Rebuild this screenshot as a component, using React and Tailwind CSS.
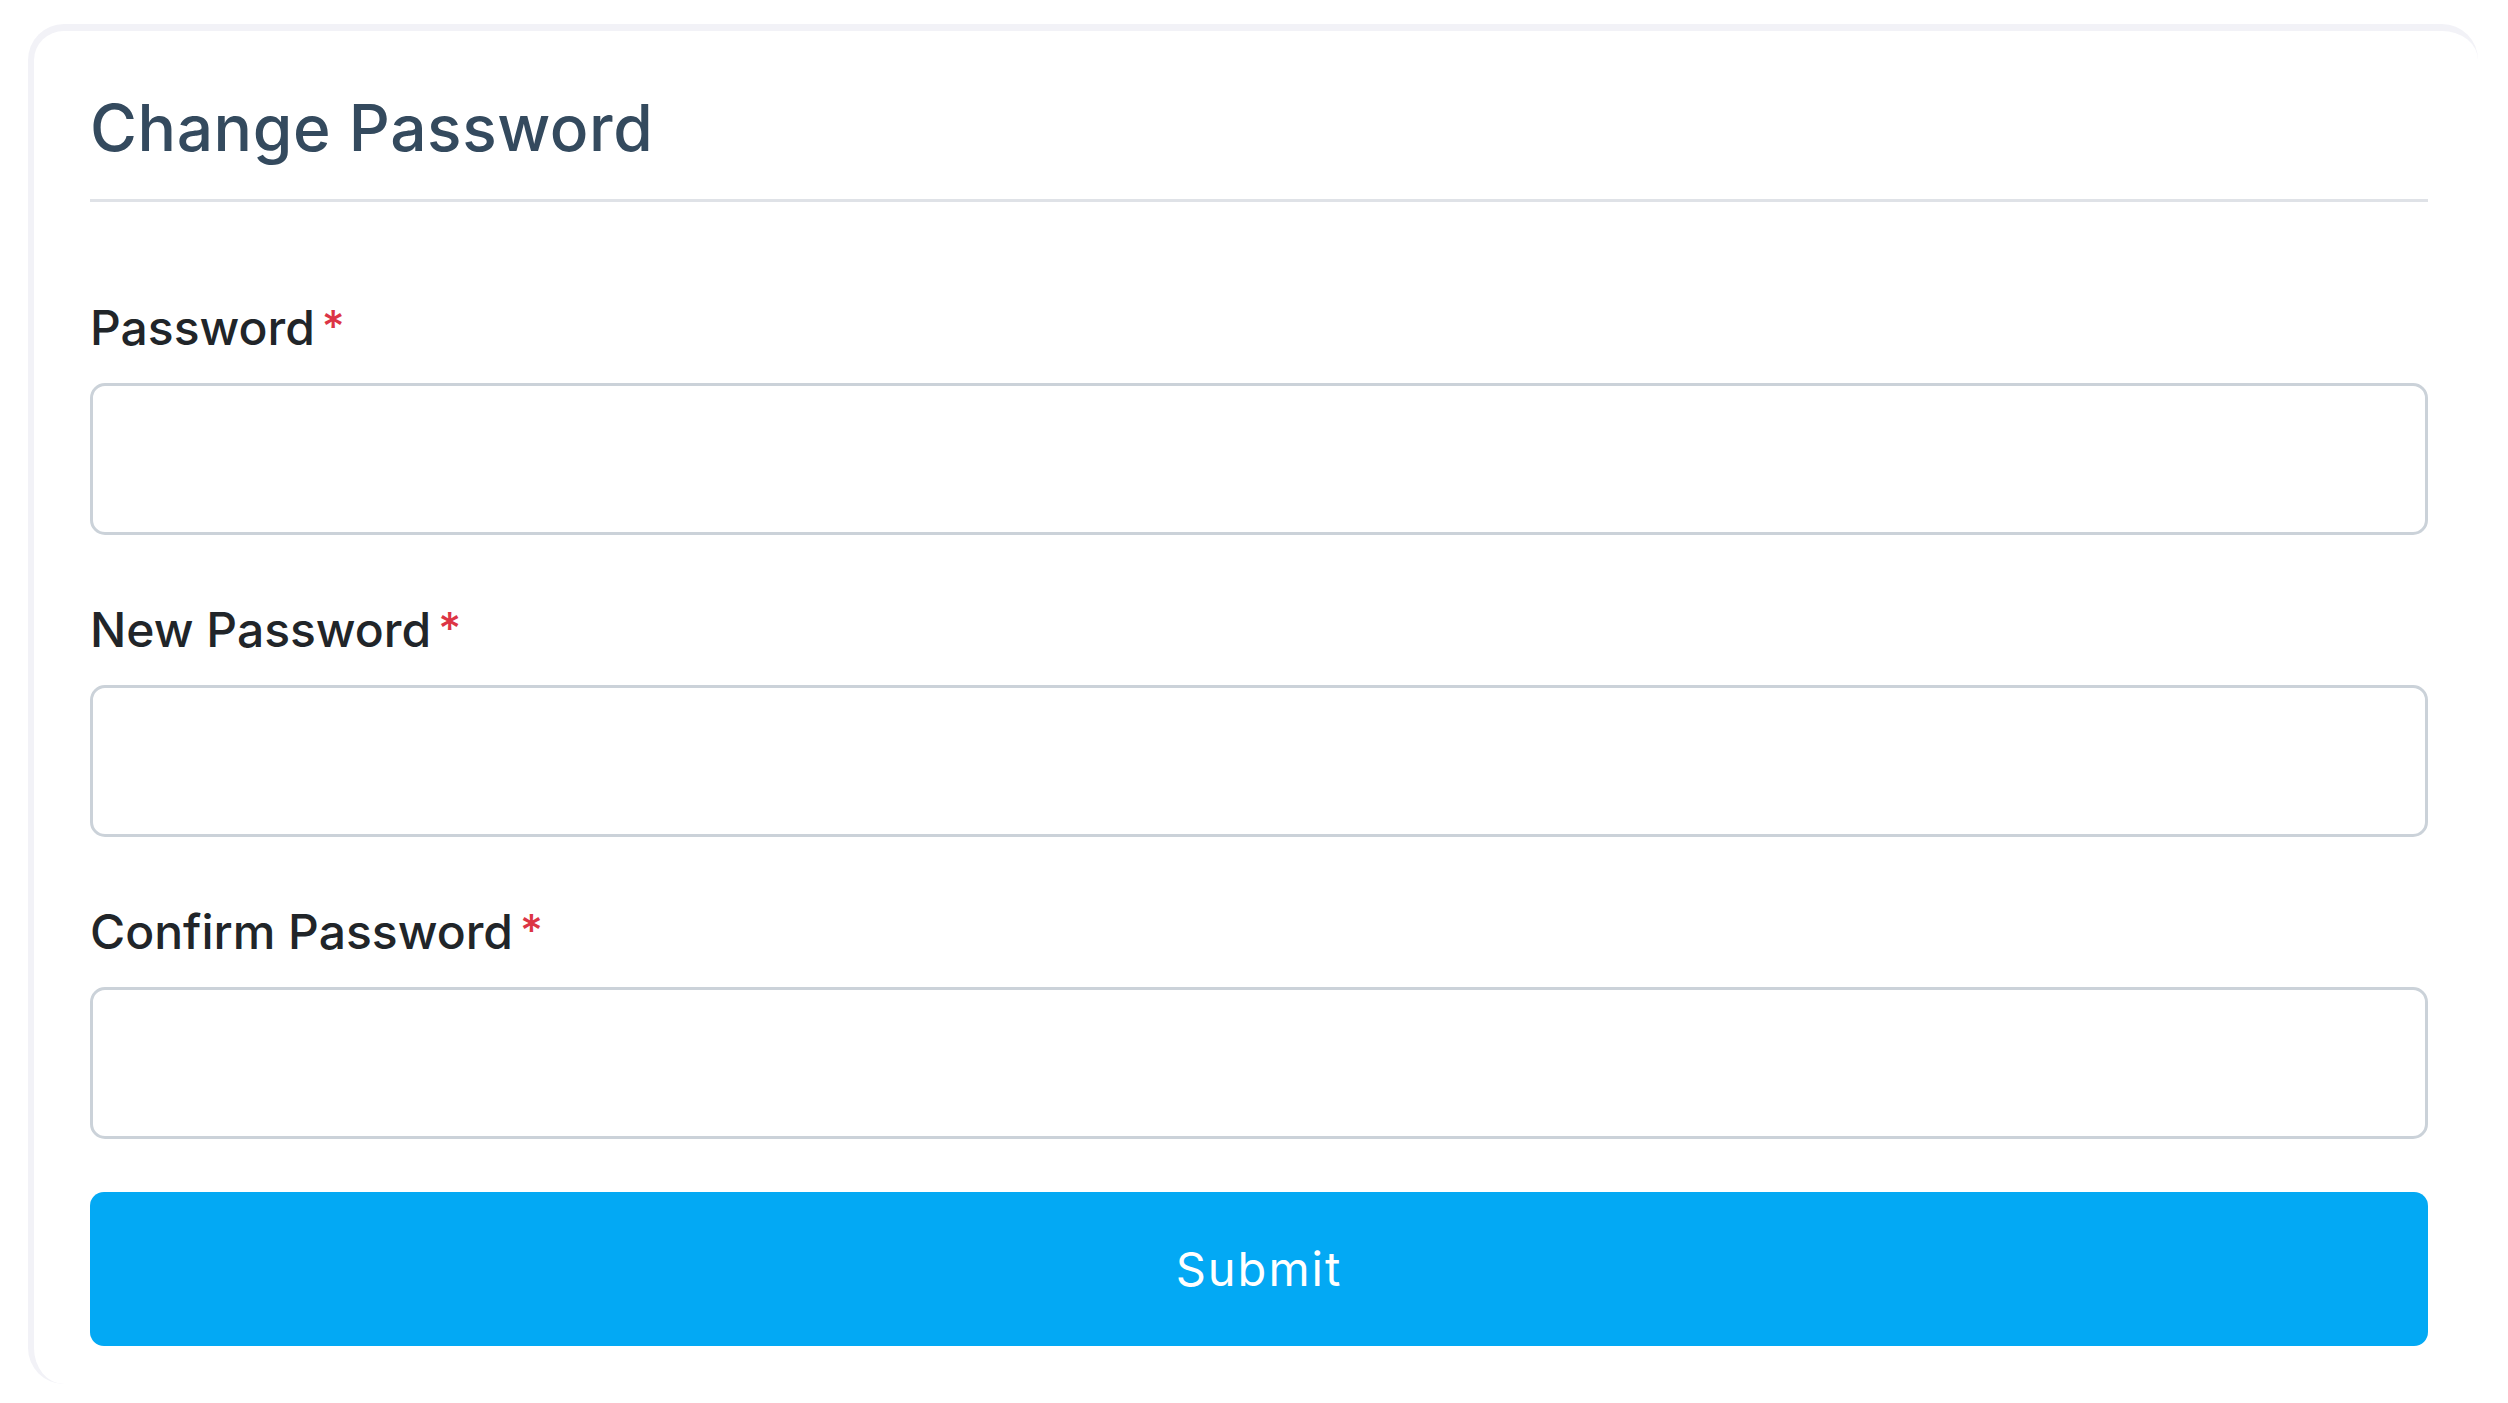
const FIELDS = [
  { name: "password", label: "Password" },
  { name: "newPassword", label: "New Password" },
  { name: "confirmPassword", label: "Confirm Password" },
];

export default function App() {
  return (
    <main
      className="min-h-screen bg-white pl-[28px] pt-[24px]"
      style={{ fontFamily: "Inter, 'Noto Sans', sans-serif" }}
    >
      <section className="w-[2450px] rounded-[36px] border-t-[7px] border-l-[6px] border-[#f2f2f7] bg-white pl-[56px] pr-[50px] pb-[38px] pt-[65px]">
        <h1 className="text-[64px] font-medium leading-[64px] tracking-[0.6px] text-[#344a5e]">
          Change Password
        </h1>
        <div className="mt-[39px] h-[3px] bg-[#dfe2e7]" />

        <form className="mt-[102px]" onSubmit={(e) => e.preventDefault()}>
          {FIELDS.map((field, i) => (
            <div key={field.name} className={i > 0 ? "mt-[71px]" : ""}>
              <label
                htmlFor={field.name}
                className="flex items-start text-[48px] font-medium leading-[48px] text-[#212529]"
              >
                {field.label}
                <span className="ml-[7px] text-[44px] leading-[44px] text-[#dc3545]">*</span>
              </label>
              <input
                id={field.name}
                name={field.name}
                type="password"
                className="mt-[31px] block h-[152px] w-full rounded-[15px] border-[3px] border-[#cbd2d9] bg-white px-6 text-[44px] outline-none"
              />
            </div>
          ))}

          <button
            type="submit"
            className="mt-[53px] flex h-[154px] w-full items-center justify-center rounded-[14px] bg-[#03a9f4] text-[47px] font-normal tracking-[2px] text-white"
          >
            Submit
          </button>
        </form>
      </section>
    </main>
  );
}
